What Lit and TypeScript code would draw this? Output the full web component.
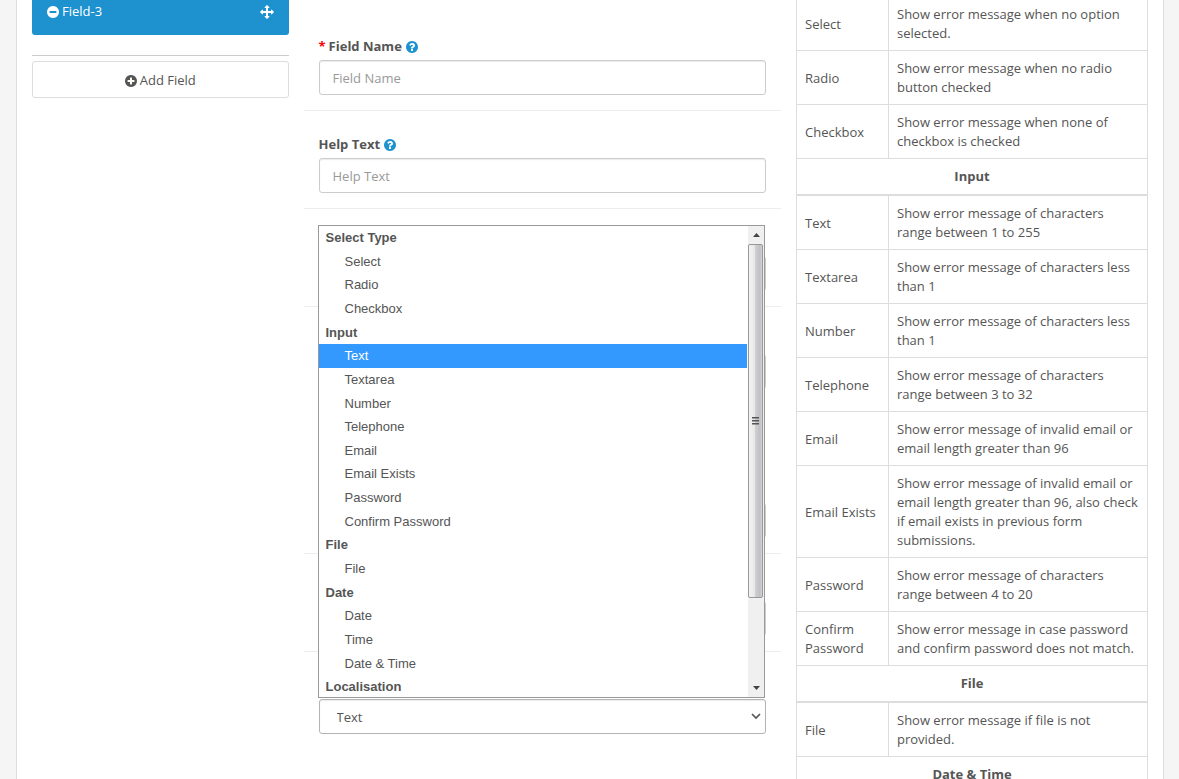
import { LitElement, html, css, svg } from "lit";
import { customElement, state } from "lit/decorators.js";

const DISC =
  "m320-64q0 209-103 385.5t-279.5 279.5-385.5 103-385.5-103-279.5-279.5-103-385.5 103-385.5 279.5-279.5 385.5-103 385.5 103 279.5 279.5 103 385.5z";

const minusPath =
  "M1216 832v-128q0-26-19-45t-45-19h-768q-26 0-45 19t-19 45v128q0 26 19 45t45 19h768q26 0 45-19t19-45z" + DISC;
const plusPath =
  "M1216 832v-128q0-26-19-45t-45-19h-256v-256q0-26-19-45t-45-19h-128q-26 0-45 19t-19 45v256h-256q-26 0-45 19t-19 45v128q0 26 19 45t45 19h256v256q0 26 19 45t45 19h128q26 0 45-19t19-45v-256h256q26 0 45-19t19-45z" + DISC;
const helpPath =
  "M896 1248v-192q0-14-9-23t-23-9h-192q-14 0-23 9t-9 23v192q0 14 9 23t23 9h192q14 0 23-9t9-23zm256-672q0-88-55.5-163t-138.5-116-170-41q-243 0-371 213-15 24 8 42l132 100q7 6 19 6 16 0 25-12 53-68 86-92 34-24 86-24 48 0 85.5 26t37.5 59q0 38-20 61t-68 45q-63 28-115.5 86.5t-52.5 125.5v36q0 14 9 23t23 9h192q14 0 23-9t9-23q0-19 21.5-49.5t54.5-49.5q32-18 49-28.5t46-35 44.5-48 28-60.5 12.5-81zm384 192q0 209-103 385.5t-279.5 279.5-385.5 103-385.5-103-279.5-279.5-103-385.5 103-385.5 279.5-279.5 385.5-103 385.5 103 279.5 279.5 103 385.5z";
const arrowsPath =
  "M1792 896q0 26-19 45l-256 256q-19 19-45 19t-45-19-19-45v-128h-384v384h128q26 0 45 19t19 45-19 45l-256 256q-19 19-45 19t-45-19l-256-256q-19-19-19-45t19-45 45-19h128v-384h-384v128q0 26-19 45t-45 19-45-19l-256-256q-19-19-19-45t19-45l256-256q19-19 45-19t45 19 19 45v128h384v-384h-128q-26 0-45-19t-19-45 19-45l256-256q19-19 45-19t45 19l256 256q19 19 19 45t-19 45-45 19h-128v384h384v-128q0-26 19-45t45-19 45 19l256 256q19 19 19 45z";

const icon = (path: string, box: number, cls: string) =>
  html`<svg class=${cls} viewBox="0 0 ${box} ${box}" aria-hidden="true">${svg`<path d=${path}></path>`}</svg>`;

interface Group {
  label: string;
  options: string[];
}

const groups: Group[] = [
  { label: "Select Type", options: ["Select", "Radio", "Checkbox"] },
  {
    label: "Input",
    options: ["Text", "Textarea", "Number", "Telephone", "Email", "Email Exists", "Password", "Confirm Password"],
  },
  { label: "File", options: ["File"] },
  { label: "Date", options: ["Date", "Time", "Date & Time"] },
  { label: "Localisation", options: [] },
];

type Row = { head: string } | { name: string; text: string };

const rows: Row[] = [
  { name: "Select", text: "Show error message when no option selected." },
  { name: "Radio", text: "Show error message when no radio button checked" },
  { name: "Checkbox", text: "Show error message when none of checkbox is checked" },
  { head: "Input" },
  { name: "Text", text: "Show error message of characters range between 1 to 255" },
  { name: "Textarea", text: "Show error message of characters less than 1" },
  { name: "Number", text: "Show error message of characters less than 1" },
  { name: "Telephone", text: "Show error message of characters range between 3 to 32" },
  { name: "Email", text: "Show error message of invalid email or email length greater than 96" },
  {
    name: "Email Exists",
    text: "Show error message of invalid email or email length greater than 96, also check if email exists in previous form submissions.",
  },
  { name: "Password", text: "Show error message of characters range between 4 to 20" },
  { name: "Confirm Password", text: "Show error message in case password and confirm password does not match." },
  { head: "File" },
  { name: "File", text: "Show error message if file is not provided." },
  { head: "Date & Time" },
];

@customElement("type-picker")
export class TypePicker extends LitElement {
  @state() private value = "Text";

  static styles = css`
    :host {
      display: block;
      position: relative;
    }
    .box {
      display: grid;
      align-items: center;
    }
    .select {
      grid-area: 1 / 1;
      box-sizing: border-box;
      width: 100%;
      height: 35px;
      padding: 1px 32px 0 17px;
      border: 1px solid #b4b4b4;
      border-radius: 3px;
      background: #fff;
      box-shadow: inset 0 1px 1px rgba(0, 0, 0, 0.08);
      color: #555;
      font: 13px/19px "Open Sans", sans-serif;
      appearance: none;
    }
    .chevron {
      grid-area: 1 / 1;
      justify-self: end;
      width: 10px;
      height: 7px;
      margin-right: 5px;
      fill: none;
      stroke: #555;
      stroke-width: 1.7;
      pointer-events: none;
    }
    .popup {
      position: absolute;
      z-index: 1;
      bottom: 36px;
      left: -1px;
      box-sizing: border-box;
      width: 100%;
      height: 473px;
      border: 1px solid #999;
      background: #fff;
      display: flex;
      overflow: hidden;
    }
    .list {
      flex: 1;
      height: 473px;
      margin: 0 1px 0 0;
      padding: 0;
      display: grid;
      grid-auto-rows: 1fr;
      list-style: none;
      color: #555;
      font: 13px/23px "Liberation Sans", Arial, sans-serif;
    }
    .group {
      padding-left: 7px;
      font-weight: bold;
    }
    .option {
      padding-left: 26px;
      cursor: default;
    }
    .chosen {
      background: #3399ff;
      color: #fff;
    }
    .bar {
      width: 16px;
      display: flex;
      flex-direction: column;
      background: #f0f0f0;
    }
    .step {
      height: 18px;
      display: grid;
      place-items: center;
    }
    .arrow {
      width: 7px;
      height: 4px;
      fill: #444;
    }
    .thumb {
      box-sizing: border-box;
      height: 354px;
      margin-right: 1px;
      border: 1px solid #979797;
      border-radius: 2px;
      background: linear-gradient(90deg, #f4f4f4, #e6e6e8 45%, #cfcfd2 50%, #bebec4 85%, #d8d8da);
      display: grid;
      place-items: center;
    }
    .grip {
      width: 7px;
      height: 8px;
      fill: #555;
    }
    .rest {
      flex: 1;
    }
  `;

  private pick(option: string) {
    this.value = option;
  }

  render() {
    return html`
      <div class="box">
        <select
          class="select"
          aria-label="Type"
          .value=${this.value}
          @change=${(e: Event) => this.pick((e.target as HTMLSelectElement).value)}
        >
          ${groups.map(
            (g) => html`<optgroup label=${g.label}>
              ${g.options.map((o) => html`<option value=${o} ?selected=${o === this.value}>${o}</option>`)}
            </optgroup>`
          )}
        </select>
        <svg class="chevron" viewBox="0 0 10 7" aria-hidden="true"><path d="M1 1l4 4 4-4"></path></svg>
      </div>
      <div class="popup">
        <ul class="list" role="listbox" aria-label="Type">
          ${groups.map(
            (g) => html`
              <li class="group" role="presentation">${g.label}</li>
              ${g.options.map(
                (o) => html`<li
                  class="option ${o === this.value ? "chosen" : ""}"
                  role="option"
                  aria-selected=${o === this.value}
                  @click=${() => this.pick(o)}
                >${o}</li>`
              )}
            `
          )}
        </ul>
        <div class="bar" aria-hidden="true">
          <div class="step"><svg class="arrow" viewBox="0 0 7 4"><path d="M0 4L3.5 0 7 4z"></path></svg></div>
          <div class="thumb">
            <svg class="grip" viewBox="0 0 7 8"><path d="M0 0h7v1.5H0zM0 3h7v1.5H0zM0 6h7v1.5H0z"></path></svg>
          </div>
          <div class="rest"></div>
          <div class="step"><svg class="arrow" viewBox="0 0 7 4"><path d="M0 0L3.5 4 7 0z"></path></svg></div>
        </div>
      </div>
    `;
  }
}

@customElement("app-root")
export class AppRoot extends LitElement {
  static styles = css`
    :host {
      display: block;
      height: 100vh;
      overflow: hidden;
      background: #f5f5f5;
      color: #555;
      font: 13px/19px "Open Sans", sans-serif;
    }
    .panel {
      box-sizing: border-box;
      min-height: 100vh;
      margin: 0 15px 0 16px;
      border: solid #dcdcdc;
      border-width: 0 1px;
      background: #fff;
    }
    .columns {
      display: grid;
      grid-template-columns: 3fr 5fr 4fr;
      align-items: start;
      margin-top: -4px;
    }
    .side,
    .rules {
      padding: 0 15px;
    }
    .tab {
      box-sizing: border-box;
      width: 100%;
      padding: 6px 15px 14px;
      border: 0;
      border-radius: 3px;
      background: #1e91cf;
      color: #fff;
      font: inherit;
      display: flex;
      align-items: center;
      gap: 3px;
    }
    .name {
      flex: 1;
      text-align: left;
    }
    .disc {
      flex: none;
      width: 12px;
      height: 12px;
      fill: currentColor;
    }
    .move {
      width: 14px;
      height: 14px;
      fill: currentColor;
    }
    .rule {
      height: 1px;
      margin: 20px 0 5px;
      border: 0;
      background: #ccc;
    }
    .add {
      box-sizing: border-box;
      width: 100%;
      padding: 9px 12px 7px;
      border: 1px solid #ddd;
      border-radius: 3px;
      background: #fff;
      color: #555;
      font: inherit;
      display: flex;
      align-items: center;
      justify-content: center;
      gap: 3px;
    }
    .form {
      padding-top: 17px;
    }
    .field {
      box-sizing: border-box;
      min-height: 98px;
      padding: 24px 15px 15px;
      border-bottom: 1px solid #ededed;
      display: flex;
      flex-direction: column;
      justify-content: flex-end;
    }
    .pair {
      gap: 114px;
      padding-top: 47px;
    }
    .last {
      border-bottom-color: transparent;
    }
    .label {
      display: flex;
      align-items: center;
      gap: 4px;
      margin-bottom: 4px;
      font-weight: bold;
    }
    .star {
      margin-right: -1px;
      color: #f00;
    }
    .help {
      color: #1e91cf;
    }
    .input {
      box-sizing: border-box;
      width: 100%;
      height: 35px;
      padding: 8px 13px;
      border: 1px solid #ccc;
      border-radius: 3px;
      background: #fff;
      box-shadow: inset 0 1px 1px rgba(0, 0, 0, 0.08);
      color: #555;
      font: inherit;
    }
    .input::placeholder {
      color: #999;
      opacity: 1;
    }
    .table {
      width: 100%;
      border-collapse: collapse;
      border: 1px solid #ddd;
    }
    .cell {
      padding: 8px 8px 7px;
      border: 1px solid #ddd;
    }
    .key {
      box-sizing: border-box;
      width: 92px;
      font-weight: normal;
      text-align: left;
    }
    .head {
      padding: 8px;
      border: 1px solid #ddd;
      border-bottom-width: 2px;
      text-align: center;
      font-weight: bold;
    }
  `;

  render() {
    return html`
      <main class="panel">
        <div class="columns">
          <nav class="side">
            <button class="tab" type="button">
              ${icon(minusPath, 1536, "disc")}<span class="name">Field-3</span>${icon(arrowsPath, 1792, "move")}
            </button>
            <hr class="rule" />
            <button class="add" type="button">${icon(plusPath, 1536, "disc")}<span>Add Field</span></button>
          </nav>

          <form class="form">
            <div class="field">
              <label class="label" for="field-name">
                <span class="star">*</span><span>Field Name</span>${icon(helpPath, 1536, "disc help")}
              </label>
              <input class="input" id="field-name" type="text" placeholder="Field Name" />
            </div>
            <div class="field">
              <label class="label" for="help-text">
                <span>Help Text</span>${icon(helpPath, 1536, "disc help")}
              </label>
              <input class="input" id="help-text" type="text" placeholder="Help Text" />
            </div>
            <div class="field"><input class="input" type="text" aria-label="Placeholder" /></div>
            <div class="field pair">
              <input class="input" type="text" aria-label="Error Message" />
              <input class="input" type="text" aria-label="Default Value" />
            </div>
            <div class="field"><input class="input" type="text" aria-label="Sort Order" /></div>
            <div class="field last"><type-picker></type-picker></div>
          </form>

          <section class="rules">
            <table class="table">
              <tbody>
                ${rows.map((r) =>
                  "head" in r
                    ? html`<tr><th class="head" colspan="2">${r.head}</th></tr>`
                    : html`<tr><th class="cell key" scope="row">${r.name}</th><td class="cell">${r.text}</td></tr>`
                )}
              </tbody>
            </table>
          </section>
        </div>
      </main>
    `;
  }
}
